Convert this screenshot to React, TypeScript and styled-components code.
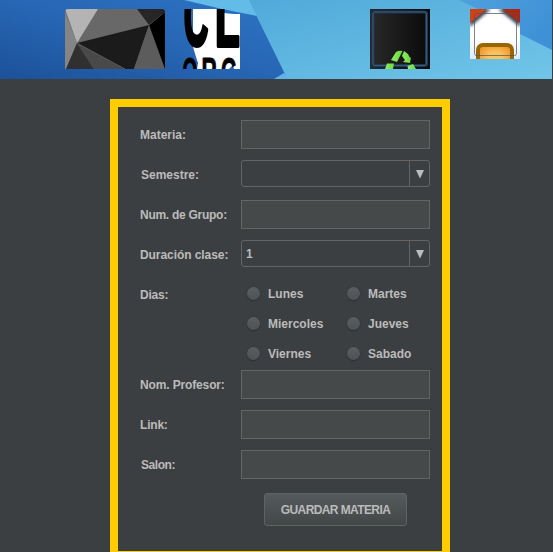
import React from "react";
import styled, { createGlobalStyle } from "styled-components";

const Global = createGlobalStyle`
  * { box-sizing: border-box; }
  html, body { margin: 0; height: 100%; overflow: hidden; background: #3c3f41; }
  body, input, button { font: bold 12px "Liberation Sans", Arial, sans-serif; color: #bbbbbb; }
`;

const Page = styled.div`
  width: 553px;
  height: 552px;
  overflow: hidden;
  background: #3c3f41;
`;

const Header = styled.header`
  position: relative;
  width: 552px;
  height: 79px;
  overflow: hidden;
`;

const Backdrop = styled.svg`
  position: absolute;
  inset: 0;
`;

const Toolbar = styled.nav`
  position: relative;
  display: flex;
  align-items: flex-start;
  padding: 9px 0 0 65px;
`;

const Tool = styled.svg<{ $gap?: number }>`
  display: block;
  flex: none;
  margin-left: ${(p) => p.$gap ?? 0}px;
`;

const Frame = styled.form`
  width: 340px;
  height: 460px;
  margin: 20px 0 0 110px;
  padding: 13px 12px 0 22px;
  border: 8px solid #ffcc00;
  display: flex;
  flex-direction: column;
`;

const Row = styled.div<{ $height?: number }>`
  display: grid;
  grid-template-columns: 101px 189px;
  align-items: start;
  flex: none;
  height: ${(p) => p.$height ?? 40}px;
`;

const Label = styled.label<{ $inset?: boolean; $tracking?: number }>`
  line-height: 31px;
  white-space: nowrap;
  padding-left: ${(p) => (p.$inset ? 1 : 0)}px;
  letter-spacing: ${(p) => p.$tracking ?? 0}px;
`;

const TextField = styled.input`
  width: 189px;
  height: 29px;
  padding: 0 6px;
  background: #45494a;
  border: 1px solid #646464;
  border-radius: 0;
  outline: none;
`;

const Combo = styled.div`
  display: flex;
  width: 189px;
  height: 27px;
  border: 1px solid #646464;
  border-radius: 3px;
`;

const ComboValue = styled.span`
  flex: 1;
  padding-left: 4px;
  line-height: 26px;
`;

const ComboArrow = styled.span`
  display: flex;
  align-items: center;
  justify-content: center;
  width: 20px;
  padding-left: 1px;
  border-left: 1px solid #646464;
`;

const Days = styled.div`
  display: grid;
  grid-template-columns: 100px 89px;
  grid-auto-rows: 30px;
`;

const Day = styled.label`
  display: flex;
  align-items: center;
  height: 27px;
  padding-left: 6px;
  gap: 8px;
`;

const Dot = styled.span`
  width: 13px;
  height: 13px;
  border-radius: 50%;
  background: linear-gradient(#5a5e60, #4d5254);
  box-shadow: 0 0 0 0.5px #343638, 0 1px 1px #2b2d2f;
`;

const SaveButton = styled.button`
  width: 143px;
  height: 33px;
  margin: 3px 0 0 124px;
  padding: 0;
  flex: none;
  border: 1px solid #5e6364;
  border-radius: 3px;
  background: linear-gradient(#555a5c, #434748);
  white-space: nowrap;
  letter-spacing: -0.6px;
`;

const HeaderBackdrop = () => (
  <Backdrop width="552" height="79" viewBox="0 0 552 79">
    <defs>
      <linearGradient id="deep" x1="0" y1="1" x2="1" y2="0">
        <stop offset="0" stopColor="#1c5199" />
        <stop offset="0.5" stopColor="#2766b4" />
        <stop offset="1" stopColor="#2d74c4" />
      </linearGradient>
      <linearGradient id="sky" x1="0" y1="0" x2="1" y2="1">
        <stop offset="0" stopColor="#50a9d9" />
        <stop offset="1" stopColor="#70c5e8" />
      </linearGradient>
      <linearGradient id="corner" x1="0" y1="0" x2="1" y2="0.5">
        <stop offset="0" stopColor="#4ea0dd" />
        <stop offset="1" stopColor="#3f91d7" />
      </linearGradient>
    </defs>
    <rect width="290" height="79" fill="url(#deep)" />
    <path d="M248 0H552V79H287L284 72L256 15Z" fill="url(#sky)" />
    <path d="M184 0H249L257 16L222 9Z" fill="#62bce7" />
    <path d="M274 79L284 73L288 79Z" fill="#5fb4e6" />
    <path d="M459 0H552V50L520 34L486 13Z" fill="url(#corner)" />
  </Backdrop>
);

const PolygonArt = () => (
  <Tool width="100" height="60" viewBox="0 0 100 60">
    <clipPath id="poly">
      <path d="M3 0H97Q100 0 100 3V60H0V3Q0 0 3 0Z" />
    </clipPath>
    <g clipPath="url(#poly)">
      <rect width="100" height="60" fill="#686868" />
      <path d="M0 0H33L12 34Z" fill="#b4b4b4" />
      <path d="M0 3L12 34L1 60H0Z" fill="#858585" />
      <path d="M12 34L1 60H29Z" fill="#303030" />
      <path d="M12 34L29 60H60Z" fill="#494949" />
      <path d="M12 34L84 16L69 60H60Z" fill="#1b1b1b" />
      <path d="M84 16L69 60H100Z" fill="#5c5c5c" />
      <path d="M72 0H100V3L84 16Z" fill="#262626" />
      <path d="M100 2V60L84 16Z" fill="#000" />
      <path d="M84 16L100 3M12 34L60 60" fill="none" stroke="#777" strokeWidth="0.5" />
    </g>
  </Tool>
);

const LetterArt = () => (
  <Tool $gap={15} width="60" height="60" viewBox="0 0 60 60">
    <path d="M13 0H41V3Q46 5 60 5V60H54L53 56L49 60H17L18 54L16 48L13 38Z" fill="#fff" />
    <g
      fontFamily="Liberation Sans, sans-serif"
      fontWeight="bold"
      fill="#000"
      stroke="#000"
      strokeLinejoin="round"
    >
      <text transform="translate(3.8 36) scale(.42 1)" fontSize="81" strokeWidth="4">C</text>
      <text transform="translate(35 37) scale(.5 1)" fontSize="81" strokeWidth="4">L</text>
      <text transform="translate(2.5 76) scale(.5 1)" fontSize="38" strokeWidth="1">O</text>
      <text transform="translate(21.5 76) scale(.56 1)" fontSize="38" strokeWidth="1">R</text>
      <text transform="translate(41 76) scale(.54 1)" fontSize="38" strokeWidth="1">G</text>
    </g>
  </Tool>
);

const RecycleArt = () => (
  <Tool $gap={130} width="60" height="60" viewBox="0 0 60 60">
    <defs>
      <linearGradient id="screen">
        <stop offset="0" stopColor="#292929" />
        <stop offset="1" stopColor="#090909" />
      </linearGradient>
      <linearGradient id="leaf" x1="0" x2="1">
        <stop offset="0" stopColor="#94e76a" />
        <stop offset="1" stopColor="#64df36" />
      </linearGradient>
    </defs>
    <rect width="60" height="60" fill="url(#screen)" />
    <rect x="3" y="3" width="53.5" height="53.5" rx="2" fill="none" stroke="#20374f" strokeWidth="3" />
    <rect x="3" y="3" width="53.5" height="53.5" rx="2" fill="none" stroke="#365b80" />
    <g fill="url(#leaf)">
      <path d="M21 51L26 43Q29 41 32.5 42L27 53Z" />
      <path d="M34 42L38 45L40 49L41 48L40 54L33 53L35 51L32 47Z" />
      <path d="M17 54.5H24L23 60H15Z" />
      <path d="M37.5 57L43 55L46 60H38Z" />
    </g>
  </Tool>
);

const HouseArt = () => (
  <Tool $gap={40} width="50" height="50" viewBox="0 0 50 50">
    <defs>
      <linearGradient id="wall" x1="0" y1="0" x2="0" y2="1">
        <stop offset="0.6" stopColor="#fff" />
        <stop offset="1" stopColor="#dfe9fb" />
      </linearGradient>
      <radialGradient id="door">
        <stop offset="0.4" stopColor="#fbc35c" />
        <stop offset="1" stopColor="#f09a32" />
      </radialGradient>
      <filter id="soft" x="-30%" y="-30%" width="160%" height="160%">
        <feGaussianBlur stdDeviation="1.5" />
      </filter>
    </defs>
    <rect width="50" height="50" fill="url(#wall)" />
    <path d="M0 0H21L0 18ZM28 0H50V18Z" fill="#3d4658" filter="url(#soft)" />
    <path d="M0 0H17L0 14Z" fill="#cf4119" />
    <path d="M32 0H50V14Z" fill="#ad2813" />
    <rect x="8" y="36" width="34" height="24" rx="5" fill="url(#door)" stroke="#986500" strokeWidth="4" />
    <rect x="4.5" y="4.5" width="42" height="42" rx="2" fill="none" stroke="#555" strokeOpacity="0.72" />
  </Tool>
);

const Arrow = () => (
  <svg width="8" height="8" viewBox="0 0 8 8">
    <path d="M0 0H8L4.3 8H3.7Z" fill="#bbb" />
  </svg>
);

const Select = ({ value }: { value?: string }) => (
  <Combo>
    <ComboValue>{value}</ComboValue>
    <ComboArrow><Arrow /></ComboArrow>
  </Combo>
);

const days = ["Lunes", "Martes", "Miercoles", "Jueves", "Viernes", "Sabado"];

export default function App() {
  return (
    <Page>
      <Global />
      <Header>
        <HeaderBackdrop />
        <Toolbar>
          <PolygonArt />
          <LetterArt />
          <RecycleArt />
          <HouseArt />
        </Toolbar>
      </Header>
      <Frame>
        <Row><Label>Materia:</Label><TextField /></Row>
        <Row><Label $inset>Semestre:</Label><Select /></Row>
        <Row><Label $tracking={-0.27}>Num. de Grupo:</Label><TextField /></Row>
        <Row><Label $tracking={-0.07}>Duración clase:</Label><Select value="1" /></Row>
        <Row $height={90}>
          <Label $tracking={-0.2}>Dias:</Label>
          <Days>
            {days.map((day) => (
              <Day key={day}><Dot />{day}</Day>
            ))}
          </Days>
        </Row>
        <Row><Label $tracking={-0.14}>Nom. Profesor:</Label><TextField /></Row>
        <Row><Label $tracking={-0.2}>Link:</Label><TextField /></Row>
        <Row><Label $inset $tracking={-0.45}>Salon:</Label><TextField /></Row>
        <SaveButton type="button">GUARDAR MATERIA</SaveButton>
      </Frame>
    </Page>
  );
}
